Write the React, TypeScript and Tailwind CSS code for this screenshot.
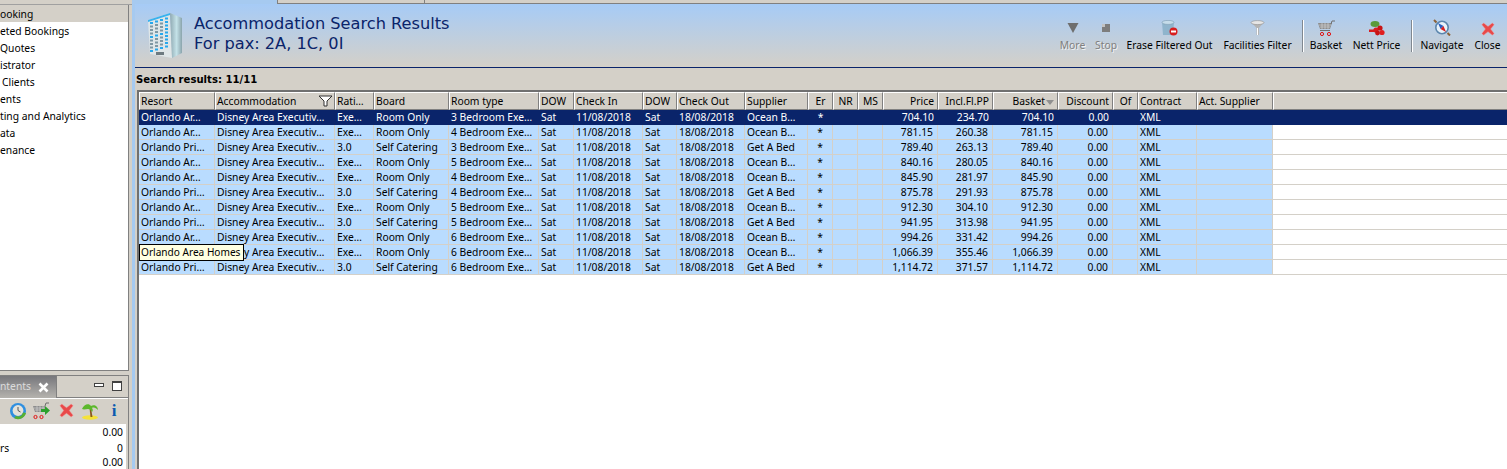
import React from "react";

const F = "font-['Noto_Sans',sans-serif]";

const cols = [
  { t: "Resort" },
  { t: "Accommodation", filter: true },
  { t: "Rati…" },
  { t: "Board" },
  { t: "Room type" },
  { t: "DOW" },
  { t: "Check In" },
  { t: "DOW" },
  { t: "Check Out" },
  { t: "Supplier" },
  { t: "Er", c: true },
  { t: "NR", c: true },
  { t: "MS", c: true },
  { t: "Price", r: true },
  { t: "Incl.Fl.PP", r: true },
  { t: "Basket", r: true, sort: true },
  { t: "Discount", r: true },
  { t: "Of", c: true },
  { t: "Contract" },
  { t: "Act. Supplier" },
];

const data: [string, string, string, string, string, string, string, string][] = [
  ["Orlando Ar…", "Exe…", "Room Only", "3 Bedroom Exe…", "Ocean B…", "704.10", "234.70", "704.10"],
  ["Orlando Ar…", "Exe…", "Room Only", "4 Bedroom Exe…", "Ocean B…", "781.15", "260.38", "781.15"],
  ["Orlando Pri…", "3.0", "Self Catering", "3 Bedroom Exe…", "Get A Bed", "789.40", "263.13", "789.40"],
  ["Orlando Ar…", "Exe…", "Room Only", "5 Bedroom Exe…", "Ocean B…", "840.16", "280.05", "840.16"],
  ["Orlando Ar…", "Exe…", "Room Only", "4 Bedroom Exe…", "Ocean B…", "845.90", "281.97", "845.90"],
  ["Orlando Pri…", "3.0", "Self Catering", "4 Bedroom Exe…", "Get A Bed", "875.78", "291.93", "875.78"],
  ["Orlando Ar…", "Exe…", "Room Only", "5 Bedroom Exe…", "Ocean B…", "912.30", "304.10", "912.30"],
  ["Orlando Pri…", "3.0", "Self Catering", "5 Bedroom Exe…", "Get A Bed", "941.95", "313.98", "941.95"],
  ["Orlando Ar…", "Exe…", "Room Only", "6 Bedroom Exe…", "Ocean B…", "994.26", "331.42", "994.26"],
  ["Orlando Ar…", "Exe…", "Room Only", "6 Bedroom Exe…", "Ocean B…", "1,066.39", "355.46", "1,066.39"],
  ["Orlando Pri…", "3.0", "Self Catering", "6 Bedroom Exe…", "Get A Bed", "1,114.72", "371.57", "1,114.72"],
];

const GRID =
  "grid grid-cols-[76px_120px_39px_75px_90px_35px_69px_34px_68px_63px_25px_25px_25px_55px_55px_65px_55px_25px_59px_76px_1fr]";

const Building = () => (
  <svg width="34" height="46" viewBox="0 0 34 46" className="shrink-0">
    <defs>
      <linearGradient id="bs" x1="0" x2="1">
        <stop offset="0" stopColor="#8fa9b2" />
        <stop offset="0.55" stopColor="#c4e2e8" />
        <stop offset="1" stopColor="#8aa4ac" />
      </linearGradient>
    </defs>
    <polygon points="0,8 22,1 24,46 2,42" fill="#dfe6e8" />
    <polygon points="22,1 34,6 34,41 24,46" fill="url(#bs)" />
    <polygon points="0,8 22,1 22,3 0,10" fill="#39b2ee" />
    {[0, 1, 2, 3].map((c) =>
      [0, 1, 2, 3, 4, 5, 6, 7, 8].map((r) => (
        <rect
          key={`${c}-${r}`}
          x={2 + c * 5}
          y={10 - c * 1.5 + r * 3.5}
          width="3"
          height="2"
          fill={c === 3 || r % 4 === 0 ? "#27a8ec" : "#7e97a3"}
        />
      )),
    )}
    <rect x="8" y="40" width="8" height="3" fill="#6d7a80" />
  </svg>
);

const More = () => (
  <svg width="16" height="16" viewBox="0 0 16 16">
    <polygon points="2.5,3 13.5,3 8,13" fill="#6e6e6e" />
  </svg>
);
const Stop = () => (
  <svg width="16" height="16" viewBox="0 0 16 16">
    <rect x="4" y="4" width="8" height="8" fill="#7d7d7d" />
    <rect x="4" y="4" width="3" height="3" fill="#c2c2c2" />
  </svg>
);
const Erase = () => (
  <svg width="17" height="16" viewBox="0 0 17 16">
    <path d="M1 2h12l-1 13H2z" fill="#8fb4cc" />
    <ellipse cx="7" cy="2.4" rx="6" ry="2" fill="#c5dcea" stroke="#7d9cb0" strokeWidth="0.6" />
    <circle cx="12.5" cy="11.5" r="4" fill="#d81e1e" />
    <rect x="10" y="10.5" width="5" height="2" fill="#fff" />
  </svg>
);
const Funnel = () => (
  <svg width="15" height="16" viewBox="0 0 15 16">
    <path d="M1 2h13L9 8v7H6.5V8z" fill="#b4b4b4" />
    <ellipse cx="7.5" cy="2.6" rx="6.5" ry="2" fill="#e6e6e6" stroke="#8f8f8f" strokeWidth="0.6" />
    <rect x="7" y="8" width="1" height="7" fill="#fff" />
  </svg>
);
const Cart = () => (
  <svg width="17" height="16" viewBox="0 0 17 16" fill="none">
    <path d="M0 3h14l-2 6H2z" fill="#8c8c8c" />
    <path d="M1 5h12M2 7h10M4 3v6M7 3v6M10 3v6" stroke="#dcdcdc" strokeWidth="0.6" />
    <path d="M13 4l1-3h3M2 10.5h10" stroke="#6e6e6e" />
    <circle cx="4" cy="14" r="1.6" stroke="#e01414" />
    <circle cx="11" cy="14" r="1.6" stroke="#e01414" />
  </svg>
);
const Nett = () => (
  <svg width="16" height="15" viewBox="0 0 16 15">
    <ellipse cx="6" cy="3" rx="4.5" ry="3" fill="#5a9a3a" />
    <rect x="0" y="8.5" width="6" height="2.5" fill="#d81e1e" />
    <circle cx="7" cy="9" r="2.6" fill="#d81e1e" />
    <circle cx="11" cy="7" r="2.6" fill="#c81414" />
    <circle cx="13" cy="11.5" r="2.6" fill="#e01e1e" />
    <circle cx="8.5" cy="12" r="2.4" fill="#c81414" />
  </svg>
);
const Navigate = () => (
  <svg width="18" height="17" viewBox="0 0 18 17">
    <circle cx="9" cy="8.500" r="6.200" fill="#e8f2fa" stroke="#5c86ad" strokeWidth="1.600" />
    <path d="M1 1l2.500 2.500M14.500 14l2.500 2.500" stroke="#8a6238" strokeWidth="2" />
    <polygon points="5,4 10.500,7 7.500,10" fill="#2a5fc0" />
    <polygon points="13,13 10.500,7 7.500,10" fill="#d82020" />
  </svg>
);
const RedX = ({ s = 14 }: { s?: number }) => (
  <svg width={s} height={s} viewBox="0 0 16 16">
    <path d="M3 1l5 4 5-4 2 2-4 5 4 5-2 2-5-4-5 4-2-2 4-5-4-5z" fill="#e84a4a" stroke="#f49a9a" strokeWidth="0.5" />
  </svg>
);
const Clock = () => (
  <svg width="18" height="18" viewBox="0 0 18 18">
    <circle cx="9" cy="9" r="8" fill="#2f8fe0" />
    <circle cx="9" cy="8.5" r="5.4" fill="#e4e2da" />
    <path d="M9 5v3.5l2.5 1.5" stroke="#555" fill="none" />
    <path d="M5 16a8 8 0 0 0 12-5l-3-.5a5 5 0 0 1-7 3.500z" fill="#58b030" />
  </svg>
);
const CartGo = () => (
  <svg width="18" height="18" viewBox="0 0 18 18" fill="none">
    <path d="M0 4h12l-1 6H2z" fill="#8c8c8c" />
    <path d="M1 6h10M2 8h9M4 4v6M7 4v6M10 4v6" stroke="#dcdcdc" strokeWidth="0.6" />
    <path d="M12 4l1-3h3" stroke="#6e6e6e" />
    <polygon points="8,7 12,7 12,4 17,8.500 12,13 12,10 8,10" fill="#2ca02c" />
    <circle cx="2.500" cy="15" r="1.6" stroke="#e01414" />
    <circle cx="8.500" cy="15" r="1.6" stroke="#e01414" />
  </svg>
);
const Palm = () => (
  <svg width="18" height="18" viewBox="0 0 18 18">
    <ellipse cx="9" cy="15.5" rx="8" ry="2.2" fill="#f5e23a" />
    <path d="M8.500 6l1 9h2L10 6z" fill="#8a5a20" />
    <path d="M1 7c2-5 7-6 9-3 3-2 7 0 7 4-2-2-4-3-6-2 1 1 1 3 0 4-1-2-2-3-4-3-2 0-4 1-6 0z" fill="#5cb82c" />
  </svg>
);

const TB = ({ icon, label, off, w }: { icon: React.ReactNode; label: string; off?: boolean; w: string }) => (
  <div className={`${w} flex flex-col items-center`}>
    <div className="h-[20px] flex items-end justify-center">{icon}</div>
    <span
      className={
        off
          ? "mt-[2px] leading-[14px] text-[#808080] [text-shadow:1px_1px_0_#f2f2f2]"
          : "mt-[2px] leading-[14px] text-black"
      }
    >
      {label}
    </span>
  </div>
);

const Sep = ({ m }: { m: string }) => (
  <div className={`${m} w-[2px] h-[32px] mt-[4px] bg-[#808890] border-r border-white`} />
);

const side = [
  ["ooking", "pl-0"],
  ["eted Bookings", "pl-0"],
  ["Quotes", "pl-0"],
  ["istrator", "pl-0"],
  ["Clients", "pl-[2px]"],
  ["ents", "pl-0"],
  ["ting and Analytics", "pl-0"],
  ["ata", "pl-0"],
  ["enance", "pl-0"],
];

const Slot = ({ children }: { children: React.ReactNode }) => (
  <div className="w-[18px] flex justify-center items-center">{children}</div>
);

export default function App() {
  return (
    <div className={`${F} w-[1507px] h-[469px] overflow-hidden flex bg-[#d4d0c8] text-[10.3px] text-black`}>
      {/* left column */}
      <div className="w-[132px] shrink-0 h-full flex flex-col">
        <div className="h-[5px] shrink-0 bg-[#d4d0c8] border-b border-[#a0a0a0]" />
        <div className="w-[129px] h-[366px] shrink-0 bg-white border-r border-[#808080] border-b">
          {side.map(([t, pl], i) => (
            <div
              key={t}
              className={`h-[17px] leading-[18px] whitespace-nowrap ${pl} ${i === 0 ? "bg-[#d4d0c8]" : ""}`}
            >
              {t}
            </div>
          ))}
        </div>
        <div className="h-[4px] shrink-0" />
        <div className="w-[129px] flex-1 min-h-0 flex flex-col border-r border-[#808080]">
          <div className="h-[23px] shrink-0 flex border-t border-[#808080]">
            <div className="w-[56px] bg-gradient-to-b from-[#77777c] to-[#b5b3ae] flex items-center whitespace-nowrap">
              <span className="text-[#dcdcdc]">ntents</span>
              <svg width="11" height="11" viewBox="0 0 11 11" className="ml-auto mr-[7px]">
                <path d="M1.500 1.500l8 8M9.500 1.500l-8 8" stroke="#fff" strokeWidth="2.6" />
              </svg>
            </div>
            <div className="flex-1 border-l border-b border-[#808080] flex justify-end gap-[8px] pr-[6px] pt-[5px] items-start">
              <div className="w-[10px] h-[4px] mt-[2px] bg-white border border-[#404040]" />
              <div className="w-[10px] h-[10px] bg-white border border-[#404040] border-t-2" />
            </div>
          </div>
          <div className="h-[26px] shrink-0 flex items-center justify-end gap-[6px] pr-[5px] pb-[2px] border-t border-white">
            <Slot><Clock /></Slot>
            <Slot><CartGo /></Slot>
            <Slot><RedX s={15} /></Slot>
            <Slot><Palm /></Slot>
            <Slot>
              <span className="font-['Liberation_Serif',serif] font-bold text-[17px] leading-[17px] text-[#0b5bb0]">i</span>
            </Slot>
          </div>
          <div className="flex-1 min-h-0 bg-white mr-[2px]">
            <div className="h-[16px] leading-[16px] flex justify-end pr-[3px]">0.00</div>
            <div className="h-[16px] leading-[16px] flex justify-between pr-[3px]">
              <span>rs</span>
              <span>0</span>
            </div>
            <div className="h-[13px] leading-[13px] flex justify-end pr-[3px]">0.00</div>
          </div>
        </div>
      </div>

      {/* splitter */}
      <div className="w-[3px] shrink-0 h-full bg-[#a6caf0]" />

      {/* main */}
      <div className="flex-1 min-w-0 h-full flex flex-col">
        <div className="h-[4px] shrink-0 flex bg-[#a6caf0]">
          <div className="w-[142px]" />
          <div className="w-[148px] bg-[#d4d0c8] border border-t-0 border-[#808080]" />
          <div className="flex-1 bg-[#d4d0c8] border-b border-[#808080]" />
        </div>
        <div className="h-[63px] shrink-0 flex bg-gradient-to-b from-[#a6cbf6] to-[#d4d0c8] border-b border-[#0a246a] box-content">
          <div className="pl-[13px] pt-[8px]">
            <Building />
          </div>
          <div className="pl-[12px] pt-[10px] text-[16.2px] leading-[20px] text-[#0a246a] whitespace-nowrap font-['DejaVu_Sans',sans-serif]">
            <div>Accommodation Search Results</div>
            <div>For pax: 2A, 1C, 0I</div>
          </div>
          <div className="ml-auto flex gap-[11px] pr-[7px] pt-[12px] whitespace-nowrap">
            <TB w="w-[23px]" icon={<More />} label="More" off />
            <TB w="w-[22px]" icon={<Stop />} label="Stop" off />
            <TB w="w-[87px] -ml-[2px]" icon={<Erase />} label="Erase Filtered Out" />
            <TB w="w-[67px]" icon={<Funnel />} label="Facilities Filter" />
            <Sep m="-mr-[5px]" />
            <TB w="w-[32px]" icon={<Cart />} label="Basket" />
            <TB w="w-[47px]" icon={<Nett />} label="Nett Price" />
            <Sep m="-mr-[4px]" />
            <TB w="w-[44px]" icon={<Navigate />} label="Navigate" />
            <TB w="w-[25px]" icon={<RedX />} label="Close" />
          </div>
        </div>
        <div className="h-[22px] shrink-0 pl-[1px] leading-[24px] font-bold text-[10.1px] text-black font-['DejaVu_Sans',sans-serif]">
          Search results: 11/11
        </div>

        <div className="relative flex-1 min-h-0 ml-[2px] border-l-2 border-t-2 border-[#707070] bg-white">
          <div className={`${GRID} h-[18px]`}>
            {cols.map((c, i) => (
              <div
                key={i}
                className={`relative bg-[#d4d0c8] border-l border-t border-l-white border-t-white border-r border-b border-r-[#808080] border-b-[#808080] px-[1px] leading-[16px] whitespace-nowrap ${
                  c.r ? "text-right pr-[3px]" : c.c ? "text-center" : ""
                }`}
              >
                {c.t}
                {c.sort && (
                  <span className="inline-block ml-[1px] align-middle w-0 h-0 border-x-[4px] border-x-transparent border-t-[5px] border-t-[#909090]" />
                )}
                {c.filter && (
                  <svg width="15" height="12" viewBox="0 0 15 12" className="absolute right-[1px] top-[2px]">
                    <path d="M1 1h13L9 6v5L6 11V6z" fill="#fff" stroke="#303030" />
                  </svg>
                )}
              </div>
            ))}
            <div className="bg-[#d4d0c8] border-l border-t border-white border-b border-b-[#808080]" />
          </div>
          {data.map((r, i) => {
            const sel = i === 0;
            const cells = [
              r[0],
              "Disney Area Executiv…",
              r[1],
              r[2],
              r[3],
              "Sat",
              "11/08/2018",
              "Sat",
              "18/08/2018",
              r[4],
              "*",
              "",
              "",
              r[5],
              r[6],
              r[7],
              "0.00",
              "",
              "XML",
              "",
            ];
            return (
              <div key={i} className={`${GRID} h-[15px]`}>
                {cells.map((v, j) => {
                  const c = cols[j];
                  return (
                    <div
                      key={j}
                      className={`px-[2px] leading-[14px] whitespace-nowrap ${
                        sel ? "bg-[#0a246a] text-white" : "bg-[#b9dcff] border-r border-b border-[#d4d0c8]"
                      } ${c.r ? "text-right pr-[4px]" : c.c ? "text-center" : ""}`}
                    >
                      {v}
                    </div>
                  );
                })}
                <div className={sel ? "bg-[#0a246a]" : "bg-white border-b border-[#d4d0c8]"} />
              </div>
            );
          })}
          <div className="absolute left-0 top-[152px] h-[17px] w-[105px] bg-[#ffffe1] border border-black pl-[1px] leading-[15px] whitespace-nowrap text-[10.1px]">
            Orlando Area Homes
          </div>
        </div>
      </div>
    </div>
  );
}
